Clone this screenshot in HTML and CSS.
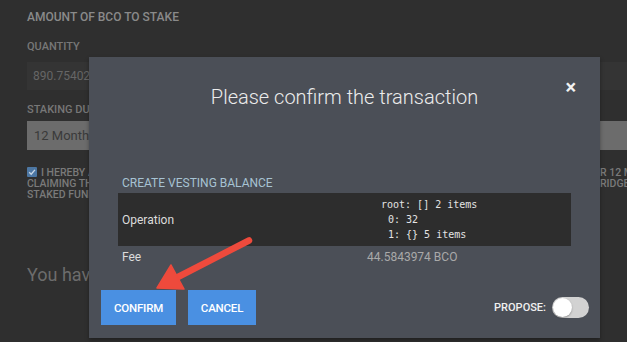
FILE: index.html
```html
<!DOCTYPE html>
<html lang="en">
<head>
    <meta charset="UTF-8">
    <meta name="viewport" content="width=device-width, initial-scale=1.0">
    <title>Stake BCO</title>
    <link rel="stylesheet" href="styles.css">
</head>
<body>
    <div class="page">
        <h2 class="section-label">Amount of BCO to stake</h2>
        <label class="field-label">Quantity</label>
        <div class="input">890.754021</div>
        <label class="field-label">Staking duration</label>
        <div class="select">12 Month (x2.00)</div>
        <div class="ack">
            <div class="ack-line">
                <span><span class="checkbox"><svg width="10" height="10" viewBox="0 0 10 10"><path d="M2.2 5.2 L4.2 7.2 L7.9 2.9" fill="none" stroke="#c9d6e4" stroke-width="1.4"/></svg></span>I HEREBY ACKNOWLEDGE</span>
                <span>R 12 MONTHS</span>
            </div>
            <div class="ack-line"><span>CLAIMING THE REWARDS</span><span>RIDGE</span></div>
            <div class="ack-line"><span>STAKED FUNDS</span><span></span></div>
        </div>
        <p class="notice">You have 890.754021 BCO available</p>
    </div>

    <div class="modal">
        <div class="modal-head">
            <h1>Please confirm the transaction</h1>
            <span class="close">&times;</span>
        </div>
        <div class="modal-body">
            <div class="op-title">Create vesting balance</div>
            <div class="op-row op-dark">
                <div class="op-key">Operation</div>
                <div class="op-val">
                    <div class="json">
                        <div>root: [] 2 items</div>
                        <div class="json-in">0: 32</div>
                        <div class="json-in">1: {} 5 items</div>
                    </div>
                </div>
            </div>
            <div class="op-row op-fee">
                <div class="op-key">Fee</div>
                <div class="op-val fee-val">44.5843974 BCO</div>
            </div>
        </div>
        <div class="modal-foot">
            <button class="btn btn-confirm">Confirm</button>
            <button class="btn btn-cancel">Cancel</button>
            <div class="spacer"></div>
            <span class="propose">Propose:</span>
            <span class="toggle"><span class="knob"></span></span>
        </div>
    </div>

    <svg class="arrow" width="627" height="342" viewBox="0 0 627 342">
        <line x1="249" y1="240.5" x2="176" y2="278" stroke="#ee4a3c" stroke-width="6.5" stroke-linecap="round"/>
        <polygon points="157,288 171,265 184,289" fill="#ee4a3c" stroke="#ee4a3c" stroke-width="1.5" stroke-linejoin="round"/>
    </svg>
</body>
</html>
```

FILE: styles.css
```css
html, body {
    margin: 0;
    height: 100%;
}
body {
    background-color: #2f2f2f;
    font-family: Roboto, "Liberation Sans", sans-serif;
    overflow: hidden;
    position: relative;
}
.page {
    padding: 10px 0 0 27px;
    width: 700px;
}
.section-label {
    margin: 0;
    font-size: 12px;
    font-weight: 500;
    line-height: 14px;
    text-transform: uppercase;
    color: #8a8a8a;
}
.field-label {
    display: block;
    margin-top: 16px;
    font-size: 11px;
    font-weight: 500;
    line-height: 13px;
    text-transform: uppercase;
    color: #777;
}
.input {
    margin-top: 9px;
    height: 28px;
    line-height: 28px;
    padding-left: 6px;
    background-color: #343434;
    font-size: 12px;
    color: #666;
}
.page .field-label + .select {
    margin-top: 5px;
}
.input + .field-label {
    margin-top: 13px;
}
.select {
    height: 29px;
    line-height: 29px;
    padding-left: 7px;
    background-color: #6c6c6c;
    font-size: 13px;
    color: #3a3a3a;
}
.ack {
    margin-top: 17px;
}
.checkbox {
    display: inline-flex;
    width: 10px;
    height: 10px;
    margin-right: 4px;
    vertical-align: -1px;
    background-color: #4d77a3;
    border-radius: 1px;
}
.ack-line {
    display: grid;
    grid-template-columns: 573px 100px;
    font-size: 10.5px;
    font-weight: 500;
    line-height: 11px;
    color: #7a7a7a;
    white-space: nowrap;
}
.ack-line span {
    overflow: hidden;
}
.notice {
    margin: 64px 0 0;
    font-size: 18px;
    line-height: 22px;
    color: #6c6c6c;
}

.modal {
    position: absolute;
    left: 89px;
    top: 57px;
    width: 511px;
    height: 281px;
    background-color: #4b4f57;
    box-shadow: 0 2px 4px rgba(0, 0, 0, 0.35);
    display: flex;
    flex-direction: column;
}
.modal-head {
    height: 116px;
    position: relative;
}
.modal-head h1 {
    margin: 0;
    padding-top: 26px;
    text-align: center;
    font-size: 20px;
    font-weight: 300;
    line-height: 28px;
    color: #ececec;
}
.close {
    position: absolute;
    right: 24px;
    top: 18px;
    font-size: 20px;
    font-weight: 700;
    color: #f2f2f2;
}
.modal-body {
    margin: 0 29px;
}
.op-title {
    height: 20px;
    line-height: 20px;
    padding-left: 4px;
    font-size: 12px;
    text-transform: uppercase;
    color: #a7c3d3;
}
.op-row {
    display: grid;
    grid-template-columns: 249px 1fr;
    font-size: 12px;
    color: #dcdcdc;
}
.op-dark {
    height: 53px;
    background-color: #2d2d2d;
    align-items: center;
}
.op-key {
    padding-left: 4px;
}
.json {
    padding-left: 14px;
    font-family: "DejaVu Sans Mono", monospace;
    font-size: 10px;
    line-height: 15px;
    color: #e4e4e4;
}
.json-in {
    padding-left: 7px;
}
.op-fee {
    height: 22px;
    line-height: 22px;
}
.fee-val {
    color: #a9a9a9;
}
.modal-foot {
    margin-top: 22px;
    padding: 0 11px 0 12px;
    display: flex;
    align-items: center;
    gap: 12px;
}
.btn {
    height: 35px;
    padding: 0;
    border: none;
    background-color: #4a90e2;
    color: #fff;
    font-family: Roboto, "Liberation Sans", sans-serif;
    font-size: 11.5px;
    font-weight: 500;
    letter-spacing: -0.2px;
    text-transform: uppercase;
}
.btn-confirm {
    width: 75px;
}
.btn-cancel {
    width: 68px;
}
.spacer {
    flex: 1;
}
.propose {
    font-size: 11px;
    font-weight: 500;
    text-transform: uppercase;
    color: #f0f0f0;
    margin-right: -6px;
}
.toggle {
    width: 37px;
    height: 21px;
    border-radius: 11px;
    background-color: #d2d2d2;
    display: flex;
    align-items: center;
    padding-left: 1px;
    box-sizing: border-box;
}
.knob {
    width: 19px;
    height: 19px;
    border-radius: 50%;
    background-color: #fff;
    box-shadow: 0 1px 2px rgba(0, 0, 0, 0.3);
}
.arrow {
    position: absolute;
    left: 0;
    top: 0;
}
```
